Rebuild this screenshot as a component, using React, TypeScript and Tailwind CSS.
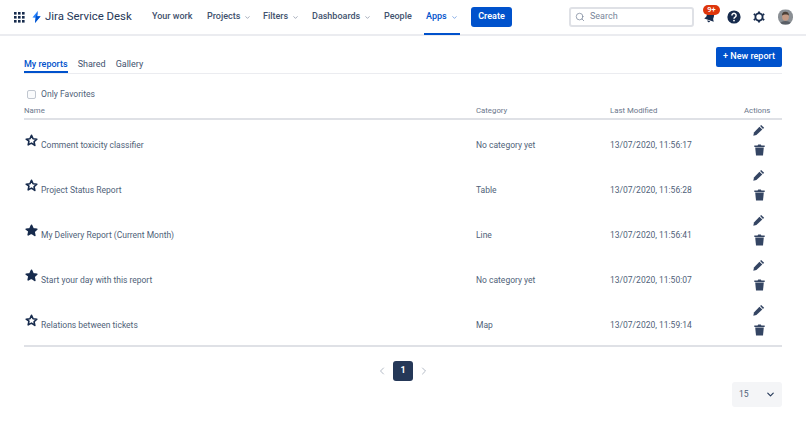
import { ChevronDown, ChevronLeft, ChevronRight, Search } from 'lucide-react';

const nav = [
  { label: 'Your work', width: 'w-[55px]' },
  { label: 'Projects', menu: true, width: 'w-[56px]' },
  { label: 'Filters', menu: true, width: 'w-[49px]' },
  { label: 'Dashboards', menu: true, width: 'w-[72px]' },
  { label: 'People', width: 'w-[40px]' },
  { label: 'Apps', menu: true, active: true, width: 'w-[35px]' },
];

const reports = [
  { name: 'Comment toxicity classifier', category: 'No category yet', modified: '13/07/2020, 11:56:17', fav: false },
  { name: 'Project Status Report', category: 'Table', modified: '13/07/2020, 11:56:28', fav: false },
  { name: 'My Delivery Report (Current Month)', category: 'Line', modified: '13/07/2020, 11:56:41', fav: true },
  { name: 'Start your day with this report', category: 'No category yet', modified: '13/07/2020, 11:50:07', fav: true },
  { name: 'Relations between tickets', category: 'Map', modified: '13/07/2020, 11:59:14', fav: false },
];

function GridIcon() {
  return (
    <svg width="11" height="11" viewBox="0 0 11 11" fill="#172b4d">
      {[0, 4, 8].map((y) =>
        [0, 4, 8].map((x) => <rect key={`${x}-${y}`} x={x} y={y} width="2.6" height="2.6" />),
      )}
    </svg>
  );
}

function Bolt() {
  return (
    <svg width="9" height="12" viewBox="0 0 10 14" className="shrink-0">
      <path d="M6.4 0 L0.3 7.6 L4 8 L3.2 14 L9.8 6.2 L5.8 6 Z" fill="#2684ff" />
      <path d="M6.4 0 L5.8 6 L9.8 6.2 L3.2 14 L4 8 Z" fill="#0052cc" />
    </svg>
  );
}

function Star({ filled }: { filled: boolean }) {
  return (
    <svg width="13" height="13" viewBox="0 0 24 24" fill={filled ? '#172b4d' : 'none'} stroke="#172b4d" strokeWidth="3" strokeLinejoin="round">
      <path d="M12 2.5l2.9 6.3 6.9.8-5.1 4.7 1.4 6.8L12 16.8l-6.1 3.3 1.4-6.8L2.2 9.6l6.9-.8z" />
    </svg>
  );
}

function Pencil() {
  return (
    <svg width="12" height="12" viewBox="0 0 12 12" fill="#344563">
      <path d="M8.2 0.9 L11.1 3.8 L10 4.9 L7.1 2 Z" />
      <path d="M6.4 2.7 L9.3 5.6 L3.4 11 L0.3 11.7 L1 8.5 Z" />
    </svg>
  );
}

function Trash() {
  return (
    <svg width="11" height="12" viewBox="0 0 11 12" fill="#344563">
      <path d="M0.3 1.6 H3.6 L4.2 0.6 H6.8 L7.4 1.6 H10.7 V3 H0.3 Z" />
      <path d="M1.2 3.6 H9.8 L9 11.6 H2 Z" />
    </svg>
  );
}

function Bell() {
  return (
    <svg width="12" height="12" viewBox="0 0 12 12" fill="#172b4d">
      <g transform="rotate(18 6 6)">
        <path d="M6 1a3.6 3.6 0 0 0-3.6 3.6V7L1 9.3h10L9.6 7V4.6A3.6 3.6 0 0 0 6 1z" />
        <path d="M4.6 10h2.8a1.4 1.4 0 0 1-2.8 0z" />
      </g>
    </svg>
  );
}

function Help() {
  return (
    <svg width="14" height="14" viewBox="0 0 14 14">
      <circle cx="7" cy="7" r="6.6" fill="#172b4d" />
      <path d="M4.9 5.4a2.1 2.1 0 1 1 3.2 1.8c-.7.4-1.1.8-1.1 1.5" fill="none" stroke="#fff" strokeWidth="1.5" />
      <circle cx="7" cy="10.6" r="0.9" fill="#fff" />
    </svg>
  );
}

function Gear() {
  return (
    <svg width="12" height="12" viewBox="0 0 14 14" fill="none" stroke="#172b4d">
      <circle cx="7" cy="7" r="4.2" strokeWidth="2.2" />
      <path d="M7 0.6v2M7 11.4v2M0.9 3.5l1.7 1M11.4 9.5l1.7 1M0.9 10.5l1.7-1M11.4 4.5l1.7-1" strokeWidth="2.2" />
    </svg>
  );
}

function Avatar() {
  return (
    <svg width="15" height="16" viewBox="0 0 16 16" className="rounded-full">
      <rect width="16" height="16" fill="#8a8f94" />
      <ellipse cx="8" cy="7.5" rx="3.6" ry="4.6" fill="#c49a84" />
      <path d="M4.2 6.5C4.4 3 6 2.4 8 2.4s3.6.8 3.8 4C10.5 4.8 6 4.8 4.2 6.5z" fill="#4a4038" />
      <path d="M2 16c.6-3 3-3.8 6-3.8s5.4.8 6 3.8z" fill="#5a5f66" />
    </svg>
  );
}

function Header() {
  return (
    <header className="flex h-[36px] items-center whitespace-nowrap border-b-2 border-[#ebecf0] bg-white pl-[14px] text-[#42526e]">
      <GridIcon />
      <div className="ml-[7px] flex w-[100px] shrink-0 items-center gap-[4px]">
        <Bolt />
        <span className="text-[11.4px] leading-none text-[#253858]">Jira Service Desk</span>
      </div>
      <nav className="ml-[20px] flex h-full items-center">
        {nav.map((item) => (
          <div key={item.label} className={`flex h-full shrink-0 items-center ${item.width} ${item.active ? '-mb-[2px]' : ''}`}>
            <div
              className={`flex h-full items-center gap-[4px] ${
                item.active ? 'border-b-2 border-[#0052cc] px-[2px] text-[#0052cc]' : ''
              }`}
            >
              <span className="text-[9px] font-medium">{item.label}</span>
              {item.menu && <ChevronDown size={7} strokeWidth={1.6} />}
            </div>
          </div>
        ))}
      </nav>
      <button className="ml-[12px] flex h-[20px] w-[41px] items-center justify-center rounded-[3px] bg-[#0052cc] text-[9px] font-semibold text-white">
        Create
      </button>
      <div className="ml-[57px] flex h-[20px] w-[125px] items-center gap-[5px] rounded-[3px] border-2 border-[#dfe1e6] pl-[4px] text-[9px] text-[#7a869a]">
        <Search size={10} strokeWidth={1.8} />
        <span>Search</span>
      </div>
      <div className="relative ml-[9px] flex h-[14px] w-[14px] items-center justify-center">
        <Bell />
        <span className="absolute -top-[5px] left-[0px] flex h-[10px] w-[17px] items-center justify-center rounded-full bg-[#de350b] text-[7.5px] font-semibold text-white">
          9+
        </span>
      </div>
      <div className="ml-[10px]"><Help /></div>
      <div className="ml-[12px]"><Gear /></div>
      <div className="ml-[13px]"><Avatar /></div>
    </header>
  );
}

export default function App() {
  return (
    <div className="h-[428px] w-[806px] overflow-hidden bg-white font-['Roboto','Noto_Sans',sans-serif]">
      <Header />
      <main className="px-[24px]">
        <div className="flex h-[38px] items-end justify-between border-b border-[#ebecf0]">
          <div className="flex gap-[10px] text-[9px] leading-[12px] text-[#42526e]">
            <span className="border-b-2 border-[#0052cc] pb-[1px] font-medium text-[#0052cc]">My reports</span>
            <span>Shared</span>
            <span>Gallery</span>
          </div>
          <button className="mb-[6px] flex h-[20px] w-[66px] items-center justify-center rounded-[2px] bg-[#0052cc] text-[9px] font-medium text-white">
            + New report
          </button>
        </div>
        <label className="mt-[14px] flex items-center gap-[5px] pl-[3px] text-[8.6px] text-[#505f79]">
          <span className="h-[9px] w-[9px] rounded-[2px] border border-[#c1c7d0] bg-[#fafbfc]" />
          Only Favorites
        </label>
        <div className="mt-[3px] grid h-[16px] grid-cols-[452px_134px_134px_1fr] items-center border-b-2 border-[#dfe1e6] text-[7.8px] text-[#6b778c]">
          <span>Name</span>
          <span>Category</span>
          <span>Last Modified</span>
          <span className="pr-[12px] text-right">Actions</span>
        </div>
        {reports.map((r) => (
          <div key={r.name} className="grid h-[45px] grid-cols-[452px_134px_134px_1fr] items-center text-[8.5px] text-[#505f79]">
            <div className="flex items-center gap-[3px] pl-[1px]">
              <span className="-mt-[4px]"><Star filled={r.fav} /></span>
              <span className="mt-[5px]">{r.name}</span>
            </div>
            <span className="mt-[5px]">{r.category}</span>
            <span className="mt-[5px]">{r.modified}</span>
            <div className="-mt-[4px] flex flex-col items-end gap-[8px] pr-[17px]">
              <Pencil />
              <Trash />
            </div>
          </div>
        ))}
        <div className="border-t-2 border-[#dfe1e6]" />
        <div className="mt-[14px] flex items-center justify-center gap-[5px] text-[#a5adba]">
          <ChevronLeft size={12} strokeWidth={1.7} />
          <span className="flex h-[20px] w-[20px] items-center justify-center rounded-[3px] bg-[#253858] text-[9px] font-bold text-white">1</span>
          <ChevronRight size={12} strokeWidth={1.7} />
        </div>
        <div className="mt-[1px] flex justify-end">
          <div className="flex h-[25px] w-[50px] items-center justify-between rounded-[3px] bg-[#f4f5f7] pl-[7px] pr-[6px] text-[8.6px] text-[#505f79]">
            <span>15</span>
            <ChevronDown size={11} strokeWidth={2.5} color="#253858" />
          </div>
        </div>
      </main>
    </div>
  );
}
